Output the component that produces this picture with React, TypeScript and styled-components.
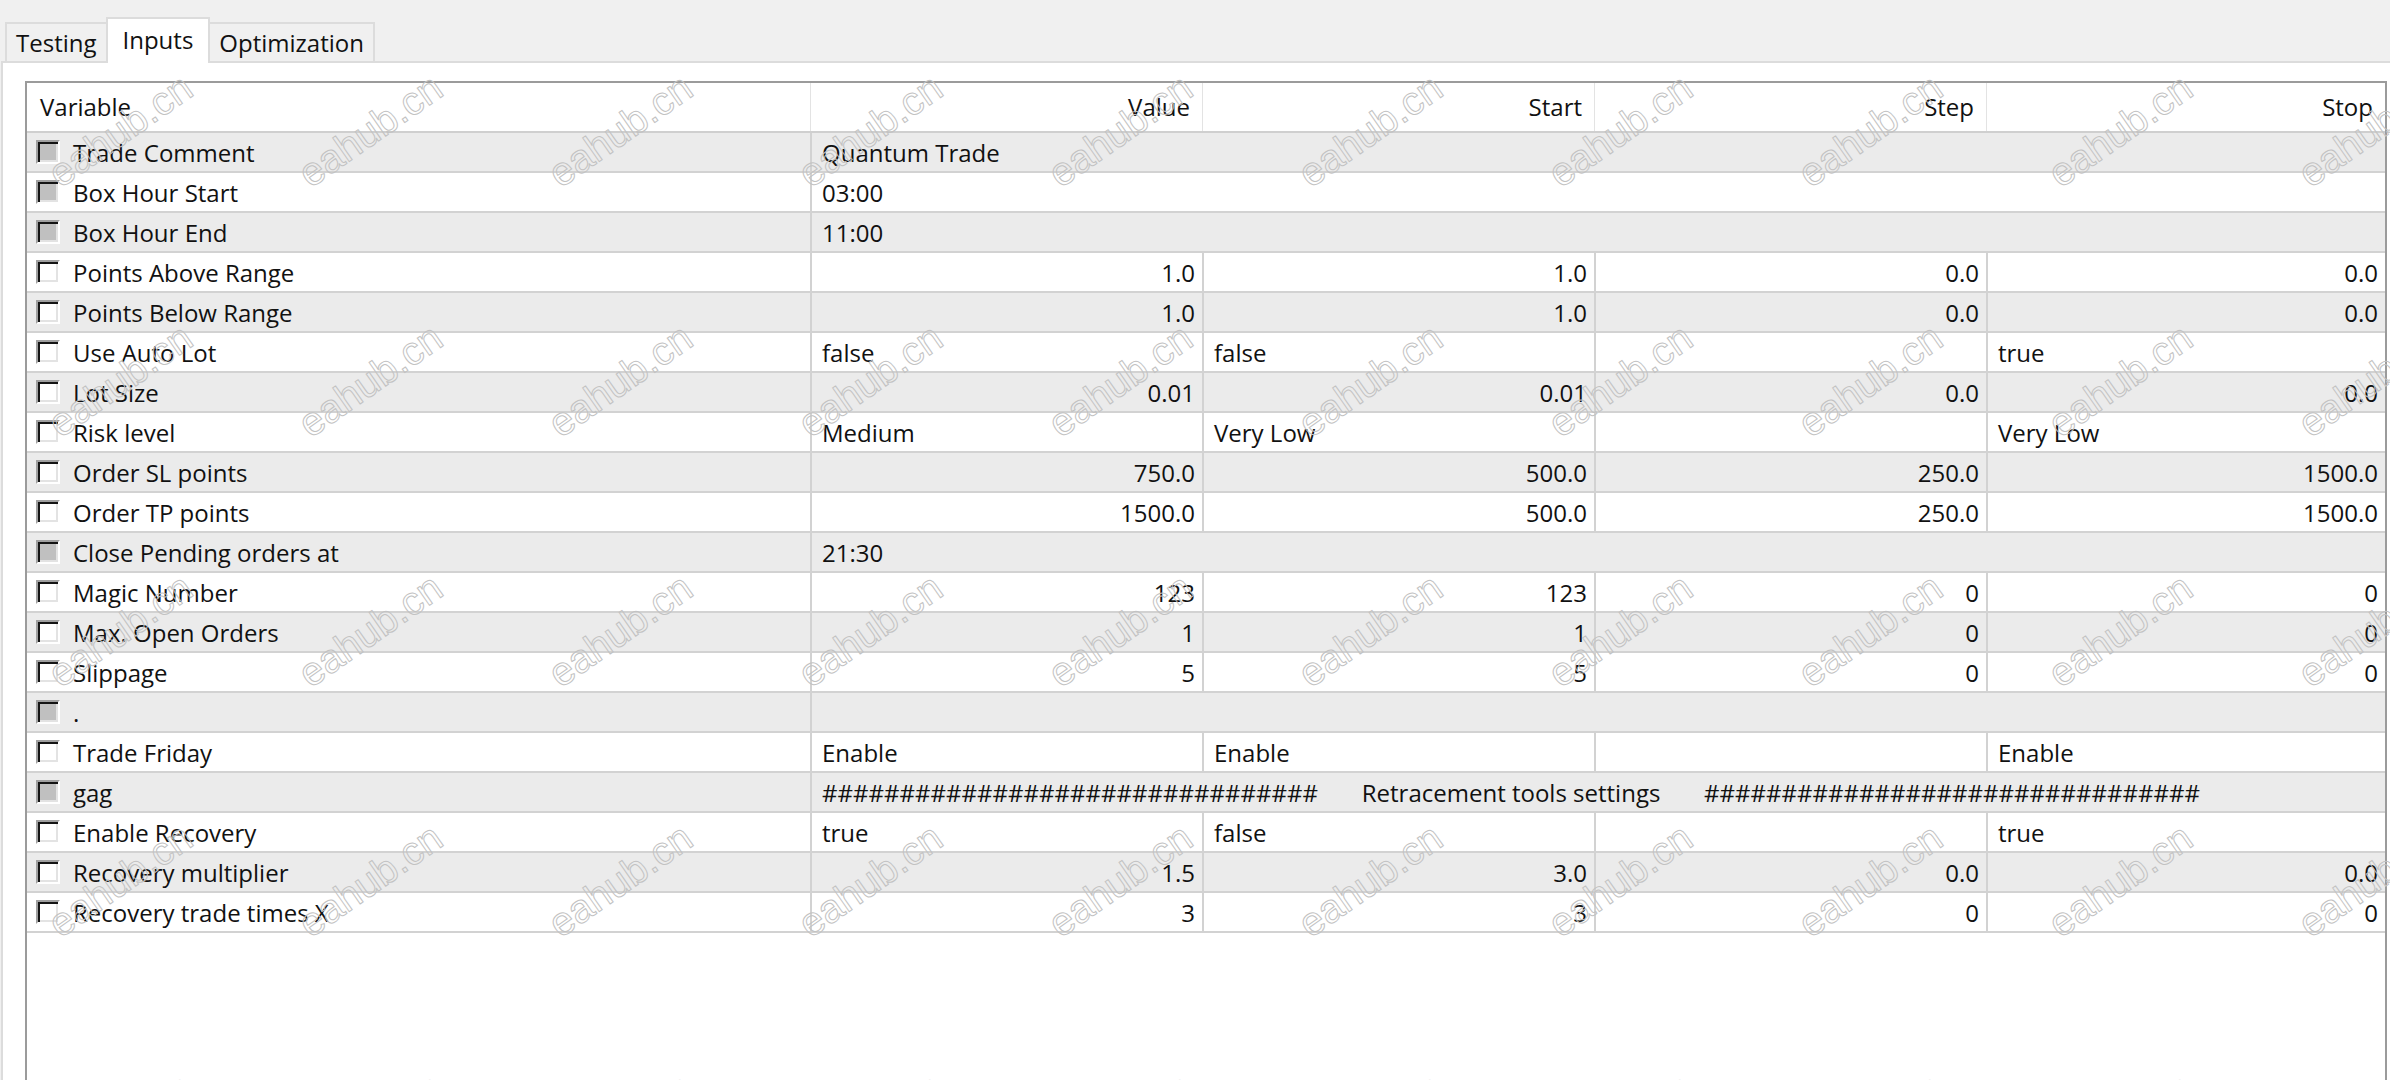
import React from "react";
import styled, { createGlobalStyle, css } from "styled-components";

const GlobalStyle = createGlobalStyle`
  html, body {
    margin: 0;
    padding: 0;
    overflow: hidden;
    background: #f0f0f0;
  }
  #root {
    height: 1080px;
  }
`;

type Params = {
  name: string;
  locked?: boolean;
  span?: string;
  cells?: [string, string, string, string];
};

const hashes = "#".repeat(32);
const gap = " ".repeat(7);

const params: Params[] = [
  { name: "Trade Comment", locked: true, span: "Quantum Trade" },
  { name: "Box Hour Start", locked: true, span: "03:00" },
  { name: "Box Hour End", locked: true, span: "11:00" },
  { name: "Points Above Range", cells: ["1.0", "1.0", "0.0", "0.0"] },
  { name: "Points Below Range", cells: ["1.0", "1.0", "0.0", "0.0"] },
  { name: "Use Auto Lot", cells: ["false", "false", "", "true"] },
  { name: "Lot Size", cells: ["0.01", "0.01", "0.0", "0.0"] },
  { name: "Risk level", cells: ["Medium", "Very Low", "", "Very Low"] },
  { name: "Order SL points", cells: ["750.0", "500.0", "250.0", "1500.0"] },
  { name: "Order TP points", cells: ["1500.0", "500.0", "250.0", "1500.0"] },
  { name: "Close Pending orders at", locked: true, span: "21:30" },
  { name: "Magic Number", cells: ["123", "123", "0", "0"] },
  { name: "Max. Open Orders", cells: ["1", "1", "0", "0"] },
  { name: "Slippage", cells: ["5", "5", "0", "0"] },
  { name: ".", locked: true, span: "" },
  { name: "Trade Friday", cells: ["Enable", "Enable", "", "Enable"] },
  {
    name: "gag",
    locked: true,
    span: `${hashes}${gap}Retracement tools settings${gap}${hashes}`,
  },
  { name: "Enable Recovery", cells: ["true", "false", "", "true"] },
  { name: "Recovery multiplier", cells: ["1.5", "3.0", "0.0", "0.0"] },
  { name: "Recovery trade times X", cells: ["3", "3", "0", "0"] },
];

const isNumber = (s: string) => /^[\d.]+$/.test(s);

const Window = styled.div`
  position: relative;
  height: 1080px;
  display: flex;
  flex-direction: column;
  overflow: hidden;
  background: #f0f0f0;
  font-family: "Open Sans", "Noto Sans", "Noto Sans CJK TC", sans-serif;
  font-size: 24px;
  color: #111;
`;

const TabStrip = styled.div`
  height: 61px;
  flex: none;
  display: flex;
  align-items: flex-end;
  padding-left: 5px;
  box-sizing: border-box;
`;

const Tab = styled.div<{ $active?: boolean }>`
  position: relative;
  display: flex;
  align-items: center;
  box-sizing: border-box;
  border: 2px solid #dcdcdc;
  border-bottom: none;
  white-space: nowrap;
  ${(p) =>
    p.$active
      ? css`
          z-index: 1;
          height: 46px;
          margin: 0 -2px -2px;
          padding: 0 15px 4px;
          background: #ffffff;
        `
      : css`
          height: 39px;
          padding: 0 9px;
          background: #f0f0f0;
        `}
`;

const Panel = styled.div`
  flex: 1;
  min-height: 0;
  display: flex;
  flex-direction: column;
  margin-left: 1px;
  padding: 18px 3px 0 22px;
  background: #ffffff;
  border-top: 2px solid #dcdcdc;
  border-left: 2px solid #dcdcdc;
`;

const TableBox = styled.div`
  flex: 1;
  margin-bottom: -12px;
  border: 2px solid #9b9b9b;
  background: #ffffff;
  overflow: hidden;
`;

const columns = css`
  display: grid;
  grid-template-columns: 783px repeat(3, 392px) 1fr;
`;

const HeaderRow = styled.div`
  ${columns};
  height: 50px;
  box-sizing: border-box;
  border-bottom: 2px solid #cfcfcf;
`;

const HeaderCell = styled.div<{ $right?: boolean }>`
  display: flex;
  align-items: center;
  justify-content: ${(p) => (p.$right ? "flex-end" : "flex-start")};
  padding: 0 12px 2px 13px;
  & + & {
    border-left: 1px solid #e3e3e3;
  }
`;

const DataRow = styled.div<{ $shaded: boolean }>`
  ${columns};
  height: 40px;
  box-sizing: border-box;
  border-bottom: 2px solid #d2d2d2;
  background: ${(p) => (p.$shaded ? "#ebebeb" : "#ffffff")};
`;

const NameCell = styled.div`
  display: flex;
  align-items: center;
  gap: 13px;
  padding-left: 9px;
  white-space: nowrap;
`;

const ValueCell = styled.div<{ $right?: boolean; $wide?: boolean }>`
  display: flex;
  align-items: center;
  justify-content: ${(p) => (p.$right ? "flex-end" : "flex-start")};
  padding: 0 7px 0 10px;
  border-left: 2px solid #d2d2d2;
  white-space: pre;
  overflow: hidden;
  ${(p) =>
    p.$wide &&
    css`
      grid-column: span 4;
    `}
`;

const Check = styled.span<{ $locked?: boolean }>`
  flex: none;
  width: 24px;
  height: 24px;
  box-sizing: border-box;
  border: 2px solid;
  border-color: #a0a0a0 #ffffff #ffffff #a0a0a0;
  background: ${(p) => (p.$locked ? "#c0c0c0" : "#ffffff")};
  box-shadow: inset 2px 2px 0 #141414, inset -2px -2px 0 #e3e3e3;
`;

const Stamps = styled.div`
  position: absolute;
  inset: 0;
  pointer-events: none;
  z-index: 5;
`;

const Stamp = styled.span`
  position: absolute;
  transform: translate(-50%, -50%) rotate(-35deg);
  font-family: "Liberation Sans", Arial, sans-serif;
  font-size: 40px;
  line-height: 1;
  color: transparent;
  -webkit-text-stroke: 1px #c2c2c2;
  white-space: nowrap;
`;

const stampSpots: { x: number; y: number }[] = [];
for (let j = 0; j < 5; j++) {
  for (let k = 0; k < 10; k++) {
    stampSpots.push({ x: 120 + 250 * k, y: 130 + 250 * j });
  }
}

export default function App() {
  return (
    <>
      <GlobalStyle />
      <Window>
        <TabStrip>
          <Tab>Testing</Tab>
          <Tab $active>Inputs</Tab>
          <Tab>Optimization</Tab>
        </TabStrip>
        <Panel>
          <TableBox>
            <HeaderRow>
              <HeaderCell>Variable</HeaderCell>
              <HeaderCell $right>Value</HeaderCell>
              <HeaderCell $right>Start</HeaderCell>
              <HeaderCell $right>Step</HeaderCell>
              <HeaderCell $right>Stop</HeaderCell>
            </HeaderRow>
            {params.map((p, i) => (
              <DataRow key={p.name + i} $shaded={i % 2 === 0}>
                <NameCell>
                  <Check $locked={p.locked} />
                  {p.name}
                </NameCell>
                {p.cells ? (
                  p.cells.map((c, ci) => (
                    <ValueCell key={ci} $right={isNumber(c)}>
                      {c}
                    </ValueCell>
                  ))
                ) : (
                  <ValueCell $wide>{p.span}</ValueCell>
                )}
              </DataRow>
            ))}
          </TableBox>
        </Panel>
        <Stamps>
          {stampSpots.map((s, i) => (
            <Stamp key={i} style={{ left: s.x, top: s.y }}>
              eahub.cn
            </Stamp>
          ))}
        </Stamps>
      </Window>
    </>
  );
}
